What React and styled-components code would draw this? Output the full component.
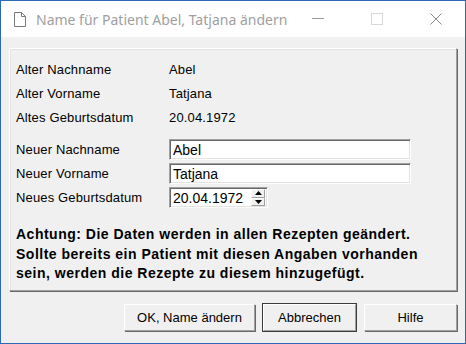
import React from 'react';
import styled, { createGlobalStyle } from 'styled-components';

const Global = createGlobalStyle`
  html, body { margin: 0; padding: 0; background: #ffffff; }
  body { font-family: "Liberation Sans", Arial, sans-serif; }
`;

const Window = styled.div`
  width: 466px;
  height: 344px;
  box-sizing: border-box;
  border: 1px solid #2c6bb4;
  background: #f0f0f0;
  display: flex;
  flex-direction: column;
`;

const TitleBar = styled.div`
  height: 36px;
  background: #ffffff;
  display: flex;
  align-items: center;
  padding-left: 13px;
  flex-shrink: 0;
`;

const Title = styled.div`
  font-family: "Noto Sans", "Open Sans", sans-serif;
  font-size: 14px;
  color: #a0a0a0;
  margin-left: 10px;
  flex: 1;
  white-space: nowrap;
`;

const Caption = styled.div`
  width: 59px;
  height: 36px;
  display: flex;
  align-items: center;
  justify-content: center;
`;

const Body = styled.div`
  flex: 1;
  padding: 11px 8px 12px 8px;
  display: flex;
  flex-direction: column;
`;

const Group = styled.div`
  border-top: 1px solid #ffffff;
  border-left: 1px solid #ffffff;
  border-right: 1px solid #a0a0a0;
  border-bottom: 1px solid #a0a0a0;
  box-shadow: 1px 1px 0 #696969, inset 1px 1px 0 #e3e3e3;
  height: 243px;
  box-sizing: border-box;
  padding: 8px 6px 0 6px;
  font-size: 13px;
  color: #000;
`;

const InfoGrid = styled.div`
  display: grid;
  grid-template-columns: 153px 1fr;
  grid-auto-rows: 24px;
  align-items: center;
`;

const FormGrid = styled.div`
  display: grid;
  grid-template-columns: 153px 242px;
  grid-auto-rows: 21px;
  row-gap: 3px;
  align-items: center;
  margin-top: 10px;
`;

const Label = styled.div`
  white-space: nowrap;
  letter-spacing: 0.15px;
`;

const Field = styled.div`
  height: 21px;
  box-sizing: border-box;
  width: ${p => p.$w || '242px'};
  background: #ffffff;
  border-top: 1px solid #a0a0a0;
  border-left: 1px solid #a0a0a0;
  border-right: 1px solid #ffffff;
  border-bottom: 1px solid #ffffff;
  box-shadow: inset 1px 1px 0 #696969, inset -1px -1px 0 #e3e3e3;
  display: flex;
  align-items: center;
  padding-left: 3px;
  font-size: 14px;
`;

const FieldText = styled.span`
  flex: 1;
`;

const Spin = styled.div`
  display: flex;
  flex-direction: column;
  width: 14px;
  height: 17px;
  margin-right: 2px;
`;

const SpinBtn = styled.div`
  flex: 1;
  background: #f0f0f0;
  border-top: 1px solid #ffffff;
  border-left: 1px solid #ffffff;
  border-right: 1px solid #a0a0a0;
  border-bottom: 1px solid #a0a0a0;
  display: flex;
  align-items: center;
  justify-content: center;
`;

const Warning = styled.div`
  margin-top: 17px;
  font-weight: bold;
  font-size: 14px;
  line-height: 19.5px;
  letter-spacing: 0.5px;
  white-space: nowrap;
`;

const Buttons = styled.div`
  margin-top: auto;
  display: flex;
  justify-content: flex-end;
  gap: 8px;
`;

const Button = styled.div`
  width: ${p => p.$w};
  height: 27px;
  box-sizing: border-box;
  background: #f0f0f0;
  border-top: 1px solid #ffffff;
  border-left: 1px solid #ffffff;
  border-right: 1px solid #a0a0a0;
  border-bottom: 1px solid #a0a0a0;
  box-shadow: 1px 1px 0 #696969;
  outline: ${p => (p.$default ? '1px solid #3c3c3c' : 'none')};
  display: flex;
  align-items: center;
  justify-content: center;
  font-size: 13px;
  color: #000;
`;

function DocIcon() {
  return (
    <svg width="12" height="15" viewBox="0 0 12 15">
      <path d="M0.5 0.5 H7.5 L11.5 4.5 V14.5 H0.5 Z" fill="#fff" stroke="#7a7a7a" />
      <path d="M7.5 0.5 V4.5 H11.5" fill="none" stroke="#7a7a7a" />
    </svg>
  );
}

function Triangle({ up }) {
  return (
    <svg width="7" height="4" viewBox="0 0 7 4">
      <path d={up ? 'M3.5 0 L7 4 H0 Z' : 'M0 0 H7 L3.5 4 Z'} fill="#000" />
    </svg>
  );
}

export default function App() {
  return (
    <>
      <Global />
      <Window>
        <TitleBar>
          <DocIcon />
          <Title>Name für Patient Abel, Tatjana ändern</Title>
          <Caption>
            <svg width="12" height="2"><rect width="12" height="1" fill="#9a9a9a" /></svg>
          </Caption>
          <Caption>
            <svg width="12" height="12"><rect x="0.5" y="0.5" width="11" height="11" fill="none" stroke="#d8d8d8" /></svg>
          </Caption>
          <Caption>
            <svg width="12" height="12"><path d="M0.5 0.5 L11.5 11.5 M11.5 0.5 L0.5 11.5" stroke="#8a8a8a" strokeWidth="1" /></svg>
          </Caption>
        </TitleBar>
        <Body>
          <Group>
            <InfoGrid>
              <Label>Alter Nachname</Label>
              <Label>Abel</Label>
              <Label>Alter Vorname</Label>
              <Label>Tatjana</Label>
              <Label>Altes Geburtsdatum</Label>
              <Label>20.04.1972</Label>
            </InfoGrid>
            <FormGrid>
              <Label>Neuer Nachname</Label>
              <Field><FieldText>Abel</FieldText></Field>
              <Label>Neuer Vorname</Label>
              <Field><FieldText>Tatjana</FieldText></Field>
              <Label>Neues Geburtsdatum</Label>
              <Field $w="99px">
                <FieldText>20.04.1972</FieldText>
                <Spin>
                  <SpinBtn><Triangle up /></SpinBtn>
                  <SpinBtn><Triangle /></SpinBtn>
                </Spin>
              </Field>
            </FormGrid>
            <Warning>
              Achtung: Die Daten werden in allen Rezepten geändert.<br />
              Sollte bereits ein Patient mit diesen Angaben vorhanden<br />
              sein, werden die Rezepte zu diesem hinzugefügt.
            </Warning>
          </Group>
          <Buttons>
            <Button $w="131px">OK, Name ändern</Button>
            <Button $w="93px" $default>Abbrechen</Button>
            <Button $w="93px">Hilfe</Button>
          </Buttons>
        </Body>
      </Window>
    </>
  );
}
